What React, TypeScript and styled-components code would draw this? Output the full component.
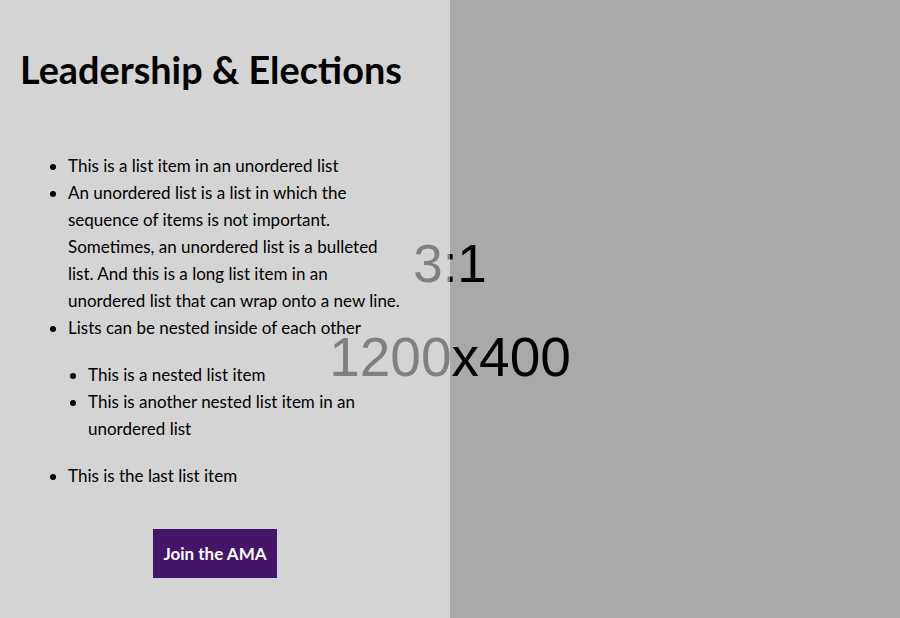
import React from "react";
import styled, { createGlobalStyle } from "styled-components";

const GlobalStyle = createGlobalStyle`
  html, body { margin: 0; padding: 0; }
  body { font-family: Lato, "Open Sans", sans-serif; }
`;

const Hero = styled.section`
  position: relative;
  width: 900px;
  height: 618px;
  overflow: hidden;
  background: #a9a9a9;
  display: grid;
  grid-template-columns: 450px 450px;
`;

const Placeholder = styled.svg`
  position: absolute;
  inset: 0;
  width: 900px;
  height: 618px;
  z-index: 0;
`;

const Panel = styled.div`
  position: relative;
  z-index: 1;
  background: rgba(255, 255, 255, 0.5);
  padding: 44px 40px 40px 20px;
  display: flex;
  flex-direction: column;
  color: #000;
`;

const Title = styled.h1`
  margin: 0 0 56px;
  font-family: Lato, sans-serif;
  font-weight: 700;
  font-size: 37.8px;
  line-height: 52px;
`;

const List = styled.ul<{ $nested?: boolean }>`
  margin: ${(p) => (p.$nested ? "20px 0 20px 0" : "0")};
  padding: ${(p) => (p.$nested ? "0 0 0 20px" : "0 4px 0 48px")};
  list-style: disc;
  font-size: 17px;
  line-height: 27px;
`;

const Item = styled.li`
  padding-left: 0;
`;

const ButtonRow = styled.div`
  display: flex;
  justify-content: center;
  margin-top: 40px;
`;

const Button = styled.button`
  border: 0;
  background: #44166a;
  color: #fff;
  font-family: Lato, sans-serif;
  font-weight: 700;
  font-size: 17px;
  height: 49px;
  padding: 0 10px;
  cursor: pointer;
`;

export default function App() {
  return (
    <>
      <GlobalStyle />
      <Hero>
        <Placeholder viewBox="0 0 900 618" aria-hidden="true">
          <text
            x="450"
            y="282"
            textAnchor="middle"
            fontFamily="'Liberation Sans', Arial, sans-serif"
            fontSize="53"
            fill="#000"
          >
            3:1
          </text>
          <text
            x="450"
            y="376"
            textAnchor="middle"
            fontFamily="'Liberation Sans', Arial, sans-serif"
            fontSize="55"
            fill="#000"
          >
            1200x400
          </text>
        </Placeholder>
        <Panel>
          <Title>Leadership &amp; Elections</Title>
          <List>
            <Item>This is a list item in an unordered list</Item>
            <Item>
              An unordered list is a list in which the sequence of items is not
              important. Sometimes, an unordered list is a bulleted list. And this
              is a long list item in an unordered list that can wrap onto a new
              line.
            </Item>
            <Item>
              Lists can be nested inside of each other
              <List $nested>
                <Item>This is a nested list item</Item>
                <Item>This is another nested list item in an unordered list</Item>
              </List>
            </Item>
            <Item>This is the last list item</Item>
          </List>
          <ButtonRow>
            <Button type="button">Join the AMA</Button>
          </ButtonRow>
        </Panel>
      </Hero>
    </>
  );
}
